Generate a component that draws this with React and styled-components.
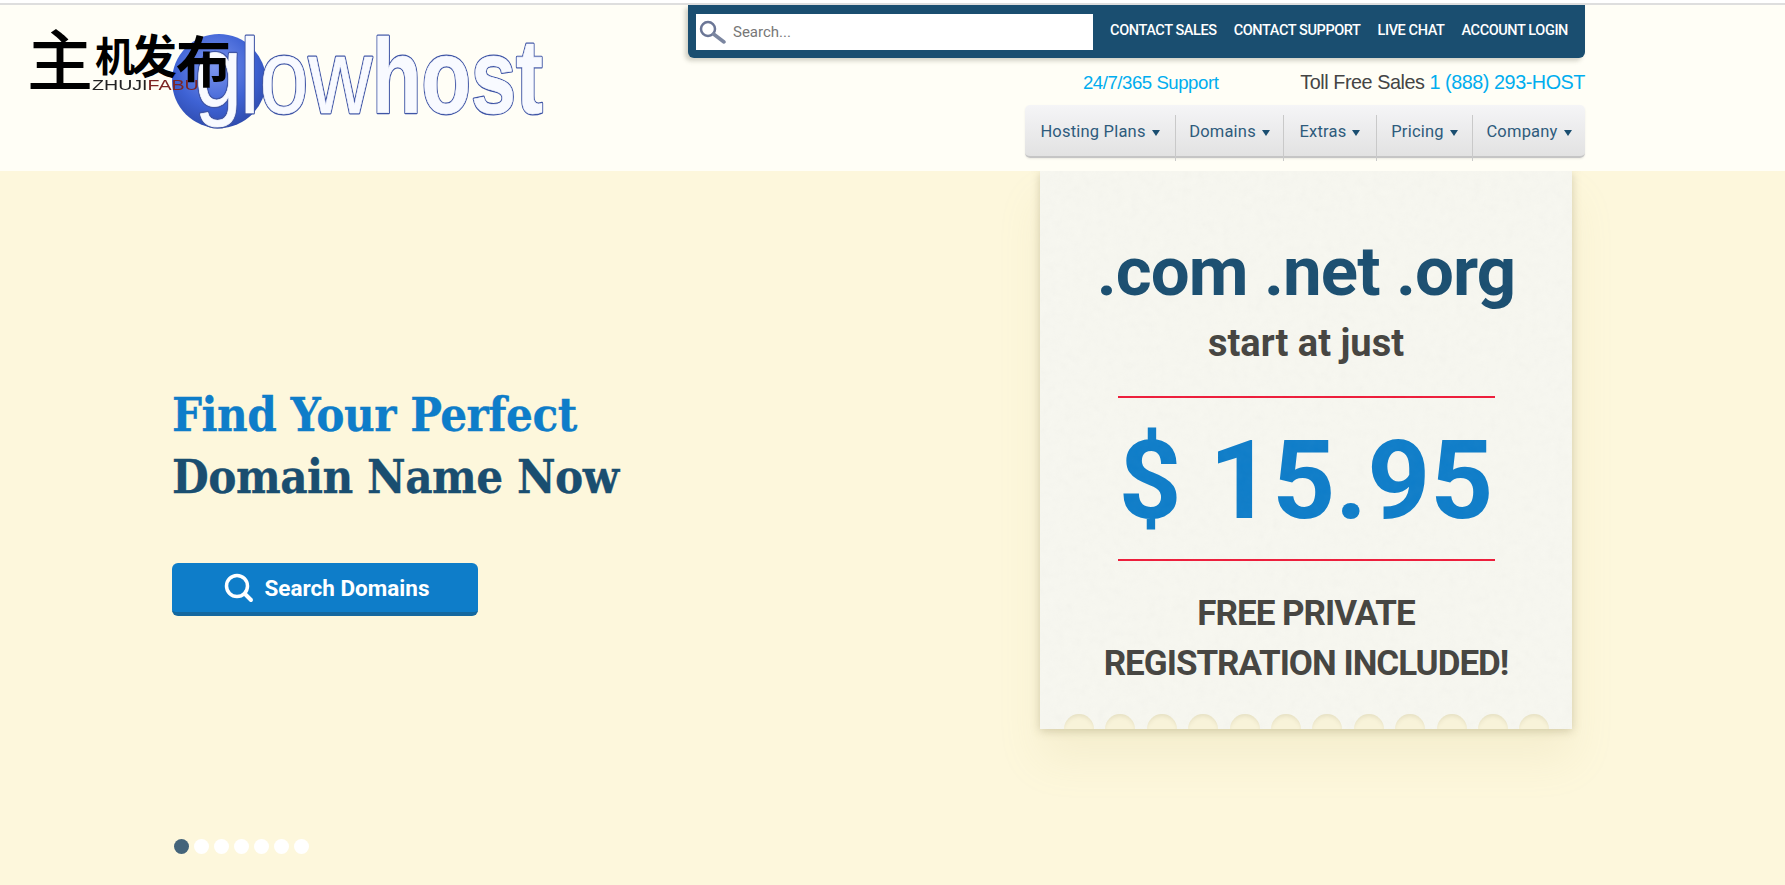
import React from "react";
import styled, { createGlobalStyle } from "styled-components";

const navy = "#1a4e70";
const blue = "#0e7dc9";
const sky = "#00adef";

const GlobalStyle = createGlobalStyle`
  html, body {
    margin: 0;
    padding: 0;
    height: 100%;
    background: #fff;
    overflow: hidden;
  }
  * { box-sizing: border-box; }
`;

const Page = styled.div`
  position: relative;
  width: 1785px;
  height: 882px;
  border-top: 2px solid #dedede;
  margin-top: 3px;
  background: #fdf7dc;
  font-family: Roboto, sans-serif;
  overflow: hidden;
`;

const Header = styled.header`
  position: relative;
  z-index: 1;
  height: 166px;
  background: #fffef6;
  padding: 0 200px 0 172px;
  display: flex;
  justify-content: space-between;
`;

const Logo = styled.svg`
  width: 376px;
  height: 110px;
  margin-top: 25px;
`;

const HeaderRight = styled.div`
  width: 897px;
  display: flex;
  flex-direction: column;
  align-items: flex-end;
`;

const TopBar = styled.div`
  width: 100%;
  height: 53px;
  background: ${navy};
  border-radius: 0 0 6px 6px;
  padding: 9px 17px 0 8px;
  display: flex;
  justify-content: space-between;
  box-shadow: -3px 3px 4px rgba(80, 80, 60, 0.25);
`;

const SearchBox = styled.label`
  flex: 0 0 397px;
  height: 36px;
  background: #fff;
  display: flex;
  align-items: center;
  padding-left: 2px;
  gap: 7px;
  color: #777;
  font-size: 15px;
`;

const TopLinks = styled.nav`
  display: flex;
  gap: 17px;
  padding-top: 6px;
`;

const TopLink = styled.a`
  color: #fff;
  font-size: 14.5px;
  font-weight: 500;
  line-height: 22px;
  letter-spacing: -0.4px;
  white-space: nowrap;
`;

const ContactRow = styled.div`
  width: 100%;
  display: flex;
  justify-content: flex-end;
  padding-top: 12px;
  height: 47px;
  font-family: "Liberation Sans", sans-serif;
  font-size: 19.8px;
  line-height: 24px;
  letter-spacing: -0.45px;
`;

const Support = styled.span`
  color: ${sky};
  font-size: 18.6px;
  margin-right: 82px;
  padding-top: 1px;
`;

const Sales = styled.span`
  color: #444;
`;

const Phone = styled.span`
  color: ${sky};
`;

const Nav = styled.nav`
  width: 560px;
  height: 53px;
  display: flex;
  background: linear-gradient(#f5f5f7, #e2e2e2);
  border-radius: 5px;
  border-bottom: 2px solid #c5c5c5;
  box-shadow: 0 1px 2px rgba(0, 0, 0, 0.08);
`;

const NavItem = styled.a`
  display: flex;
  align-items: center;
  gap: 6px;
  width: ${(p) => p.$width}px;
  justify-content: center;
  color: #2e5b7c;
  font-size: 16.5px;
  letter-spacing: 0.2px;
  border-left: ${(p) => (p.$first ? "none" : "1px solid #c9c9c9")};
  margin: 10px 0 -5px;
  padding-bottom: 14px;
`;

const Caret = styled.i`
  width: 0;
  height: 0;
  border-left: 4px solid transparent;
  border-right: 4px solid transparent;
  border-top: 6px solid ${navy};
  margin-top: 3px;
`;

const Hero = styled.main`
  height: 714px;
  padding: 0 213px 0 172px;
  display: flex;
  justify-content: space-between;
  align-items: flex-start;
  position: relative;
`;

const Pitch = styled.section`
  padding-top: 213px;
`;

const Headline = styled.h1`
  margin: 0;
  font-family: "DejaVu Serif", serif;
  font-stretch: condensed;
  font-weight: 700;
  font-size: 47px;
  line-height: 62px;
  letter-spacing: -0.5px;
  -webkit-text-stroke: 0.3px currentColor;
  color: ${navy};
`;

const HeadlineAccent = styled.span`
  display: block;
  color: ${blue};
`;

const SearchButton = styled.a`
  display: flex;
  align-items: center;
  justify-content: center;
  gap: 11px;
  width: 306px;
  height: 53px;
  margin-top: 55px;
  padding-left: 3px;
  background: ${blue};
  border-bottom: 4px solid #14689f;
  border-radius: 6px;
  color: #fff;
  font-size: 22.5px;
  font-weight: 700;
`;

const Ticket = styled.aside`
  position: relative;
  width: 532px;
  height: 558px;
  background: #f7f7f0;
  box-shadow: 0 2px 9px rgba(110, 100, 50, 0.28), 0 30px 40px rgba(200, 190, 130, 0.14);
  display: flex;
  flex-direction: column;
  align-items: center;
`;

const PaperGrain = styled.svg`
  position: absolute;
  inset: 0;
  width: 100%;
  height: 100%;
  opacity: 0.04;
  pointer-events: none;
`;

const Tlds = styled.div`
  margin-top: 62px;
  font-size: 69px;
  line-height: 78px;
  font-weight: 700;
  letter-spacing: -0.9px;
  color: ${navy};
`;

const StartAt = styled.div`
  margin-top: 7px;
  font-size: 38px;
  line-height: 50px;
  font-weight: 700;
  color: #454440;
`;

const Price = styled.div`
  width: 377px;
  margin-top: 28px;
  height: 165px;
  border-top: 2px solid #ee1c3a;
  border-bottom: 2px solid #ee1c3a;
  font-size: 110px;
  line-height: 165px;
  font-weight: 700;
  color: ${blue};
  text-align: center;
  white-space: nowrap;
`;

const Fineprint = styled.div`
  margin-top: 28px;
  font-size: 35px;
  line-height: 50px;
  font-weight: 700;
  letter-spacing: -1px;
  color: #454440;
  text-align: center;
`;

const Notches = styled.div`
  position: absolute;
  left: 24px;
  bottom: 0;
  display: flex;
  gap: 11.4px;
`;

const Notch = styled.span`
  width: 30px;
  height: 15px;
  background: #f8f3d9;
  border-radius: 15px 15px 0 0;
  box-shadow: inset 0 4px 4px -2px rgba(110, 100, 50, 0.14);
`;

const Dots = styled.div`
  position: absolute;
  left: 174px;
  bottom: 31px;
  display: flex;
  gap: 5px;
`;

const Dot = styled.span`
  width: 15px;
  height: 15px;
  border-radius: 50%;
  background: ${(p) => (p.$active ? "#44647a" : "#fff")};
`;

const Watermark = styled.div`
  position: absolute;
  z-index: 2;
  left: 30px;
  top: 24px;
  width: 205px;
  font-family: "Noto Sans CJK SC", sans-serif;
  color: #000;
`;

const MarkBig = styled.span`
  position: absolute;
  left: -3px;
  top: -13px;
  font-size: 66px;
  line-height: 80px;
  font-weight: 500;
`;

// each of these three signs has its own size in the watermark
const MarkGlyph = styled.span`
  position: absolute;
  left: ${(p) => p.$left}px;
  top: ${(p) => p.$top}px;
  font-size: ${(p) => p.$size}px;
  line-height: 1;
  font-weight: 700;
`;

const MarkLatin = styled.span`
  position: absolute;
  left: 62px;
  top: 49px;
  font-family: "Liberation Sans", sans-serif;
  font-size: 14px;
  line-height: 14px;
  color: #222;
  white-space: nowrap;
  transform: scaleX(1.4);
  transform-origin: left center;
`;

const MarkRed = styled.span`
  color: #7c2424;
`;

const navItems = [
  ["Hosting Plans", 150],
  ["Domains", 108],
  ["Extras", 93],
  ["Pricing", 96],
  ["Company", 113],
];

// the wordmark is two layers of the same text: a blue one and a thinner white one on top
const Wordmark = ({ color, width }) => (
  <g fontFamily="'Liberation Sans', sans-serif" fill={color} stroke={color} strokeWidth={width} strokeLinejoin="round">
    <text transform="translate(195 106) scale(1 1.2)" fontSize="84">g</text>
    <text x="240" y="113" fontSize="106" textLength="132" lengthAdjust="spacingAndGlyphs">low</text>
    <text x="372" y="113" fontSize="106" fontWeight="700" textLength="171" lengthAdjust="spacingAndGlyphs">host</text>
  </g>
);

export default function App() {
  return (
    <Page>
      <GlobalStyle />
      <Header>
        <Logo viewBox="172 30 376 110" aria-label="glowhost">
          <defs>
            <radialGradient id="globe" cx="0.45" cy="0.35" r="0.7">
              <stop offset="0" stopColor="#7d96ee" />
              <stop offset="0.6" stopColor="#3e62d4" />
              <stop offset="1" stopColor="#2c48a8" />
            </radialGradient>
          </defs>
          <circle cx="219" cy="81" r="47" fill="url(#globe)" />
          <Wordmark color="#3f55a6" width={3} />
          <Wordmark color="#f8faff" width={0.6} />
        </Logo>
        <HeaderRight>
          <TopBar>
            <SearchBox>
              <svg width="28" height="26" viewBox="0 0 28 26">
                <circle cx="10" cy="10" r="7" fill="none" stroke="#6b7696" strokeWidth="2.5" />
                <path d="M15.5 15 L26 23" stroke="#7b86a0" strokeWidth="3.5" strokeLinecap="round" />
              </svg>
              Search...
            </SearchBox>
            <TopLinks>
              <TopLink>CONTACT SALES</TopLink>
              <TopLink>CONTACT SUPPORT</TopLink>
              <TopLink>LIVE CHAT</TopLink>
              <TopLink>ACCOUNT LOGIN</TopLink>
            </TopLinks>
          </TopBar>
          <ContactRow>
            <Support>24/7/365 Support</Support>
            <Sales>
              Toll Free Sales <Phone>1 (888) 293-HOST</Phone>
            </Sales>
          </ContactRow>
          <Nav>
            {navItems.map(([label, width], i) => (
              <NavItem key={label} $width={width} $first={i === 0}>
                {label}
                <Caret />
              </NavItem>
            ))}
          </Nav>
        </HeaderRight>
      </Header>
      <Hero>
        <Pitch>
          <Headline>
            <HeadlineAccent>Find Your Perfect</HeadlineAccent>
            Domain Name Now
          </Headline>
          <SearchButton>
            <svg width="30" height="30" viewBox="0 0 30 30">
              <circle cx="13" cy="13" r="10.5" fill="none" stroke="#fff" strokeWidth="3.5" />
              <path d="M21 21 L27 27" stroke="#fff" strokeWidth="4" strokeLinecap="round" />
            </svg>
            Search Domains
          </SearchButton>
        </Pitch>
        <Ticket>
          <PaperGrain>
            <filter id="grain">
              <feTurbulence type="fractalNoise" baseFrequency="0.12" numOctaves="3" seed="4" />
              <feColorMatrix type="saturate" values="0" />
            </filter>
            <rect width="100%" height="100%" filter="url(#grain)" />
          </PaperGrain>
          <Tlds>.com .net .org</Tlds>
          <StartAt>start at just</StartAt>
          <Price>$ 15.95</Price>
          <Fineprint>
            FREE PRIVATE
            <br />
            REGISTRATION INCLUDED!
          </Fineprint>
          <Notches>
            {Array.from({ length: 12 }, (_, i) => (
              <Notch key={i} />
            ))}
          </Notches>
        </Ticket>
        <Dots>
          {Array.from({ length: 7 }, (_, i) => (
            <Dot key={i} $active={i === 0} />
          ))}
        </Dots>
      </Hero>
      <Watermark>
        <MarkBig>主</MarkBig>
        <MarkGlyph $left={65} $top={5} $size={40}>机</MarkGlyph>
        <MarkGlyph $left={101} $top={1} $size={46}>发</MarkGlyph>
        <MarkGlyph $left={146} $top={2} $size={55}>布</MarkGlyph>
        <MarkLatin>
          ZHUJI<MarkRed>FABU</MarkRed>
        </MarkLatin>
      </Watermark>
    </Page>
  );
}
